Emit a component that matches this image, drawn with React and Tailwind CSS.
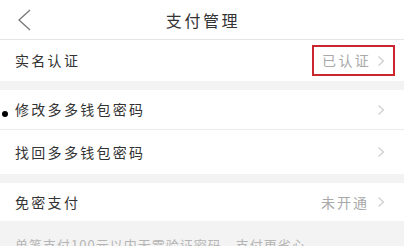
import React from 'react';

const font = { fontFamily: '"Noto Sans CJK SC", "Noto Sans", sans-serif' };

function Chevron() {
    return (
        <svg width="8" height="12" viewBox="0 0 8 12" className="shrink-0">
            <polyline points="1.5,1.5 6.5,6 1.5,10.5" fill="none" stroke="#cdcdcd" strokeWidth="1.2" />
        </svg>
    );
}

function Row({ label, value, className = '' }) {
    return (
        <div className={`flex items-center justify-between bg-white pl-[15px] pr-[19px] ${className}`}>
            <span className="text-[14px] tracking-[2.3px] text-[#333]">{label}</span>
            <div className="flex items-center gap-[8px]">
                {value && <span className="text-[14px] tracking-[2px] text-[#a9a9a9]">{value}</span>}
                <Chevron />
            </div>
        </div>
    );
}

export default function App() {
    return (
        <div className="w-[404px] h-[246px] overflow-hidden bg-[#f3f3f3]" style={font}>
            {/* 헤더 */}
            <div className="relative flex h-[40px] items-center justify-center bg-white border-b border-[#e6e6e6]">
                <svg width="16" height="22" viewBox="0 0 16 22" className="absolute left-[16px] top-[9px]">
                    <polyline points="14,1 3,11 14,21" fill="none" stroke="#777" strokeWidth="1.3" />
                </svg>
                <span className="text-[16px] tracking-[2.6px] text-[#333] pl-[2px]">支付管理</span>
            </div>

            <div className="flex h-[41px] items-center justify-between bg-white pl-[15px] pr-[9px]">
                <span className="text-[14px] tracking-[2.3px] text-[#333]">实名认证</span>
                <div className="flex h-[31px] items-center gap-[6px] border-[2.5px] border-[#c9262d] pl-[8px] pr-[8px]">
                    <span className="text-[14px] tracking-[2.3px] text-[#a9a9a9]">已认证</span>
                    <Chevron />
                </div>
            </div>

            <div className="h-[9px]" />

            <div className="relative">
                <Row label="修改多多钱包密码" className="h-[40px] border-b border-[#ececec]" />
                <div className="absolute left-[2px] top-[21px] h-[6px] w-[6px] rounded-full bg-black" />
            </div>
            <Row label="找回多多钱包密码" className="h-[44px]" />

            <div className="h-[9px]" />

            <Row label="免密支付" value="未开通" className="h-[38px]" />

            <div className="px-[15px] pt-[14px] text-[13px] tracking-[1px] text-[#b5b5b5] whitespace-nowrap">
                单笔支付100元以内无需验证密码，支付更省心
            </div>
        </div>
    );
}
